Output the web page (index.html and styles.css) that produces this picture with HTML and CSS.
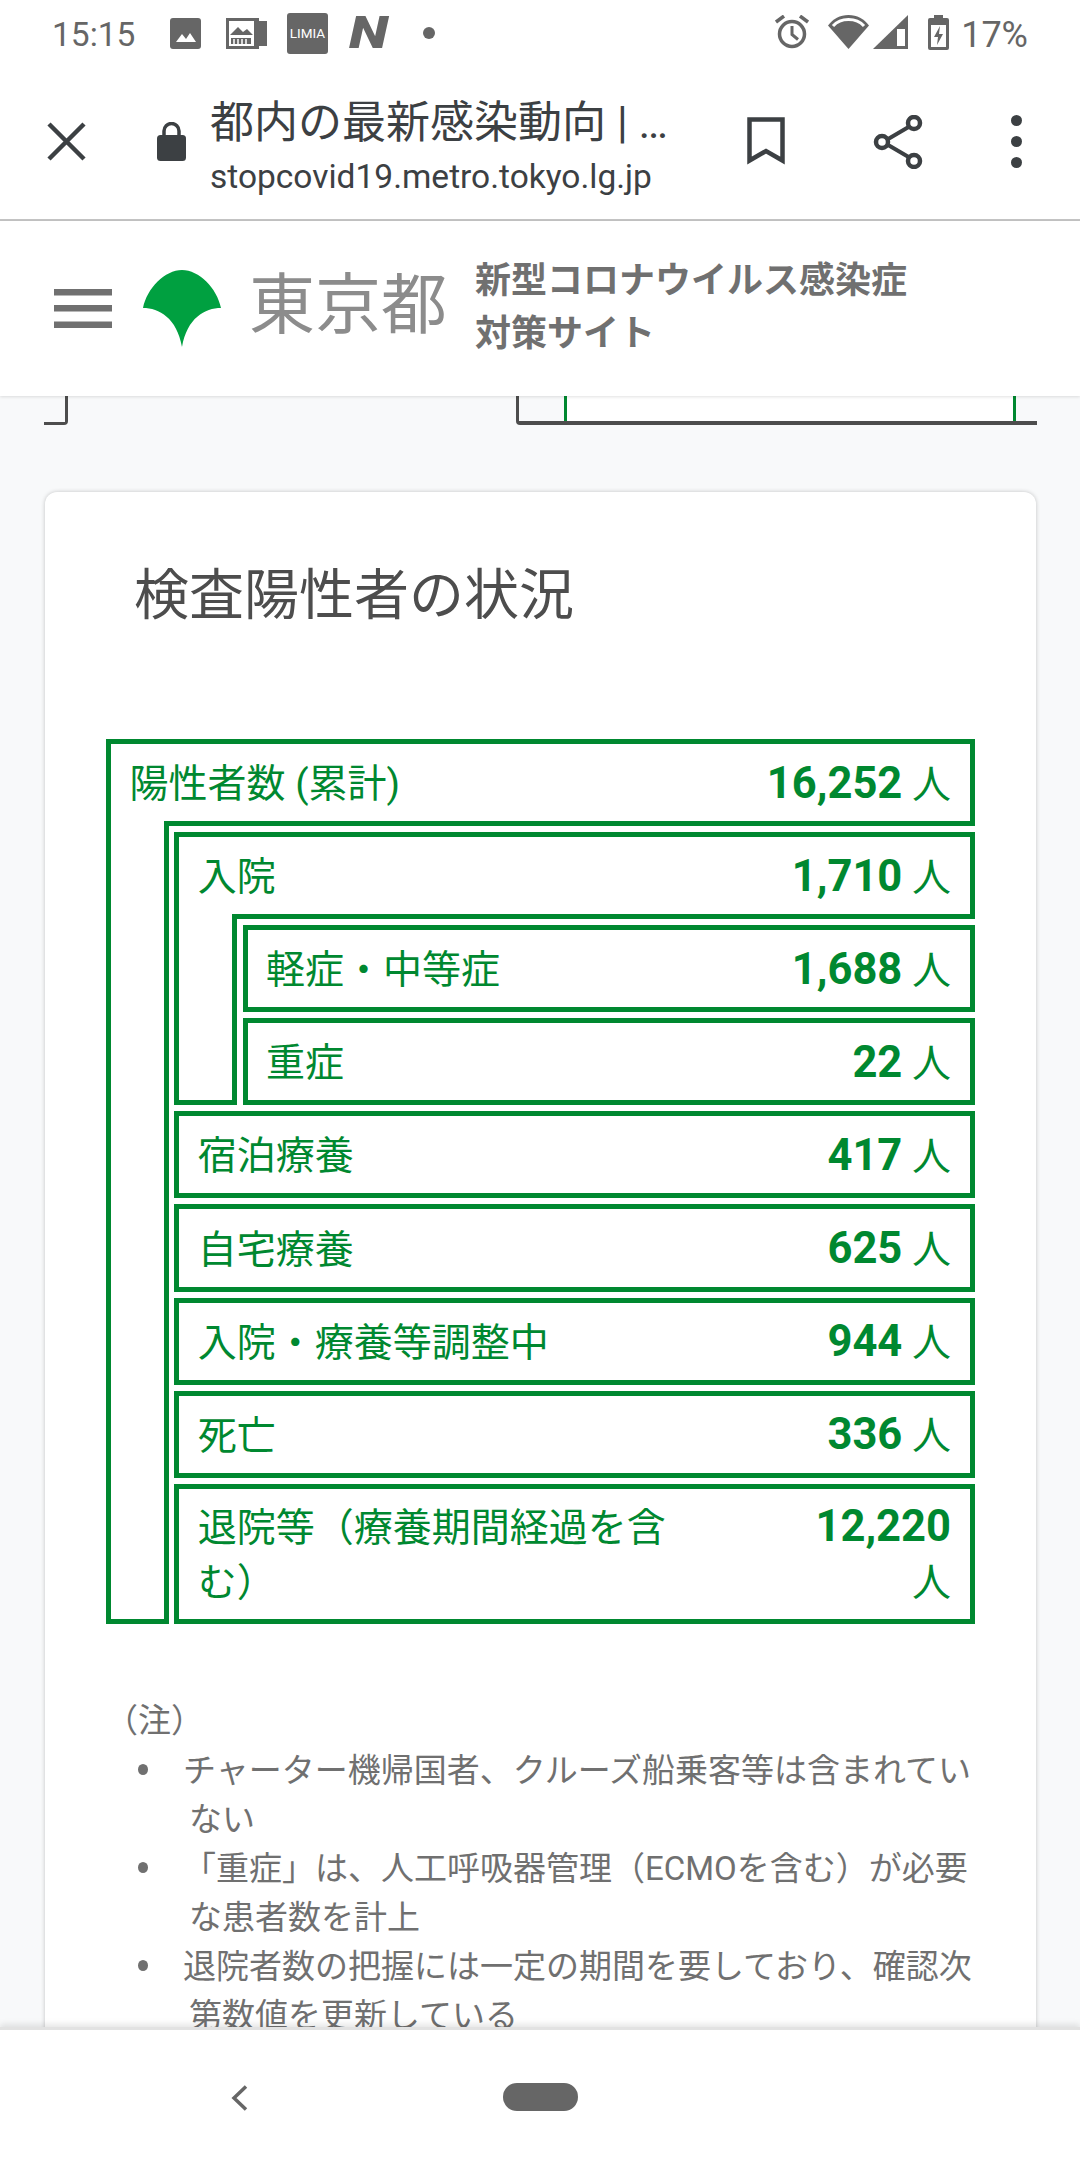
FILE: index.html
```html
<!DOCTYPE html>
<html lang="ja">
<head>
    <meta charset="UTF-8">
    <meta name="viewport" content="width=device-width, initial-scale=1.0">
    <title>都内の最新感染動向</title>
    <link rel="stylesheet" href="styles.css">
</head>
<body>
<div class="screen">

    <div class="statusbar">
        <span class="time">15:15</span>
        <svg class="ic-photo" width="31" height="31" viewBox="0 0 31 31"><rect width="31" height="31" rx="3" fill="#666"/><path d="M6 24l6-8 4 5 4-6 6 9z" fill="#fff"/></svg>
        <svg class="ic-news" width="41" height="31" viewBox="0 0 41 31"><path d="M30 3h11v25H30z" fill="#666"/><rect x="1.5" y="1.5" width="30" height="28" fill="#fff" stroke="#666" stroke-width="3"/><path d="M28 3h3v25h-3z" fill="#666"/><path d="M4 17l8-8 5 5 4-3 6 6z" fill="#666"/><path d="M5 20h20v6H5z" fill="#666"/><path d="M8 21v5M12 21v5M16 21v5M20 21v5" stroke="#fff" stroke-width="1.5"/></svg>
        <span class="limia">LIMIA</span>
        <span class="news-n">N</span>
        <span class="dot"></span>
        <span class="status-right">
            <svg class="ic-alarm" width="34" height="34" viewBox="0 0 34 34"><circle cx="17" cy="19" r="12.5" fill="none" stroke="#666" stroke-width="3.5"/><path d="M17 11v8.5l6 5" fill="none" stroke="#666" stroke-width="3"/><path d="M1 7l8-6M33 7l-8-6" stroke="#666" stroke-width="3.5"/></svg>
            <svg class="ic-wifi" width="41" height="34" viewBox="0 0 41 34"><path d="M0 10.5C5 4 12 0 20.5 0S36 4 41 10.5L20.5 34z" fill="#666"/><path d="M5 11C9 6.5 14 4.500 20.5 4.5S32 6.5 36 11" fill="none" stroke="#fff" stroke-width="3"/></svg>
            <svg class="ic-signal" width="35" height="34" viewBox="0 0 35 34"><path d="M35 0v34H0z" fill="#666"/><path d="M24 14h8v17h-8z" fill="#fff"/></svg>
            <svg class="ic-battery" width="21" height="35" viewBox="0 0 21 35"><path d="M6 0h9v3h4a2 2 0 0 1 2 2v28a2 2 0 0 1-2 2H2a2 2 0 0 1-2-2V5a2 2 0 0 1 2-2h4z" fill="#666"/><path d="M3 6h15v26H3z" fill="#fff"/><path d="M3 6h15v4H3z" fill="#666"/><path d="M12 11l-6 11h4l-1 8 6-11h-4z" fill="#666"/></svg>
            <span class="percent">17%</span>
        </span>
    </div>

    <div class="toolbar">
        <svg class="ic-close" width="39" height="39" viewBox="0 0 39 39"><path d="M2 2l35 35M37 2L2 37" stroke="#3c4043" stroke-width="4.5"/></svg>
        <svg class="ic-lock" width="29" height="39" viewBox="0 0 29 39"><path d="M7 15V9a7.5 7.5 0 0 1 15 0v6" fill="none" stroke="#3c4043" stroke-width="3.5"/><rect y="13" width="29" height="26" rx="3.5" fill="#3c4043"/></svg>
        <div class="page-info">
            <div class="page-title">都内の最新感染動向 | …</div>
            <div class="page-url">stopcovid19.metro.tokyo.lg.jp</div>
        </div>
        <svg class="ic-bookmark" width="38" height="49" viewBox="0 0 38 49"><path d="M2.5 2.5h33v41L19 34 2.5 43.5z" fill="none" stroke="#3c4043" stroke-width="4.5"/></svg>
        <svg class="ic-share" width="50" height="54" viewBox="0 0 50 54"><path d="M39 10L10 27l29 17" fill="none" stroke="#3c4043" stroke-width="4"/><circle cx="41" cy="8" r="6" fill="#fff" stroke="#3c4043" stroke-width="4.5"/><circle cx="9" cy="27" r="6" fill="#fff" stroke="#3c4043" stroke-width="4.5"/><circle cx="41" cy="46" r="6" fill="#fff" stroke="#3c4043" stroke-width="4.5"/></svg>
        <div class="ic-dots"><span></span><span></span><span></span></div>
    </div>

    <header class="site-header">
        <svg class="ic-menu" width="58" height="39" viewBox="0 0 58 39"><path d="M0 0h58v6.5H0zM0 16h58v6.5H0zM0 32.5h58V39H0z" fill="#707070"/></svg>
        <svg class="ic-ginkgo" width="78" height="77" viewBox="0 0 78 77"><path d="M39 0C56 0 74 18 78 38 62 38 44 48 39 77 34 48 16 38 0 38 4 18 22 0 39 0z" fill="#00a040"/></svg>
        <span class="tokyo">東京都</span>
        <h1 class="site-title">新型コロナウイルス感染症<br>対策サイト</h1>
    </header>

    <main class="content">
        <div class="prev-card">
            <div class="prev-left"></div>
            <div class="prev-right"><div class="prev-cell"></div></div>
        </div>

        <section class="card">
            <h2 class="card-title">検査陽性者の状況</h2>

            <div class="tree">
                <div class="row"><span class="label">陽性者数 (累計)</span><span class="value"><b>16,252</b> 人</span></div>
                <div class="rail"></div>
                <div class="branch">
                    <div class="tree">
                        <div class="row"><span class="label">入院</span><span class="value"><b>1,710</b> 人</span></div>
                        <div class="rail"></div>
                        <div class="branch">
                            <div class="row"><span class="label">軽症・中等症</span><span class="value"><b>1,688</b> 人</span></div>
                            <div class="row"><span class="label">重症</span><span class="value"><b>22</b> 人</span></div>
                        </div>
                    </div>
                    <div class="row"><span class="label">宿泊療養</span><span class="value"><b>417</b> 人</span></div>
                    <div class="row"><span class="label">自宅療養</span><span class="value"><b>625</b> 人</span></div>
                    <div class="row"><span class="label">入院・療養等調整中</span><span class="value"><b>944</b> 人</span></div>
                    <div class="row"><span class="label">死亡</span><span class="value"><b>336</b> 人</span></div>
                    <div class="row"><span class="label">退院等（療養期間経過を含<br>む）</span><span class="value"><b>12,220</b><br>人</span></div>
                </div>
            </div>

            <div class="notes">
                <p>（注）</p>
                <ul>
                    <li>チャーター機帰国者、クルーズ船乗客等は含まれていない</li>
                    <li>「重症」は、人工呼吸器管理（ECMOを含む）が必要な患者数を計上</li>
                    <li>退院者数の把握には一定の期間を要しており、確認次第数値を更新している</li>
                </ul>
            </div>
        </section>
    </main>

    <div class="navbar">
        <svg class="ic-back" width="17" height="26" viewBox="0 0 17 26"><path d="M15 1.5L3 13l12 11.5" fill="none" stroke="#666" stroke-width="3.5"/></svg>
        <span class="pill"></span>
    </div>

</div>
</body>
</html>
```

FILE: styles.css
```css
* {
    box-sizing: border-box;
}

html, body {
    margin: 0;
    padding: 0;
}

body {
    font-family: Roboto, "Noto Sans CJK JP", sans-serif;
    background-color: #fff;
}

svg {
    display: block;
    flex-shrink: 0;
}

.screen {
    width: 1080px;
    height: 2160px;
    overflow: hidden;
    display: flex;
    flex-direction: column;
}

/* status bar */
.statusbar {
    height: 64px;
    padding: 0 52px 0 52px;
    display: flex;
    align-items: flex-start;
    color: #666;
    background: #fff;
}

.time, .percent {
    font-size: 33.5px;
    line-height: 70px;
}

.percent {
    margin-left: 12px;
    font-size: 36px;
}

.time {
    width: 82px;
}

.ic-photo {
    margin: 18px 0 0 36px;
}

.ic-news {
    margin: 18px 0 0 25px;
}

.limia {
    width: 41px;
    height: 41px;
    margin: 13px 0 0 20px;
    border-radius: 3px;
    background: #666;
    color: #fff;
    font-size: 13.5px;
    line-height: 41px;
    text-align: center;
}

.news-n {
    width: 37px;
    margin: 0 0 0 22px;
    font-size: 44px;
    font-weight: 900;
    font-style: italic;
    line-height: 67px;
    text-align: center;
    transform: scaleX(1.3);
}

.dot {
    width: 12px;
    height: 12px;
    margin: 27px 0 0 36px;
    border-radius: 50%;
    background: #666;
}

.status-right {
    margin-left: auto;
    display: flex;
    align-items: flex-start;
}

.ic-alarm, .ic-wifi, .ic-battery {
    margin-top: 15px;
}

.ic-signal {
    margin: 15px 0 0 4px;
}

.ic-wifi {
    margin-left: 19px;
}

.ic-battery {
    margin-left: 20px;
}

/* browser toolbar */
.toolbar {
    height: 157px;
    padding-left: 47px;
    display: flex;
    align-items: center;
    background: #fff;
    border-bottom: 2px solid #c4c4c4;
}

.ic-lock {
    margin-left: 71px;
}

.page-info {
    width: 537px;
    margin-left: 24px;
    padding-top: 10px;
    color: #3c4043;
}

.page-title {
    font-size: 44px;
    line-height: 60px;
    white-space: nowrap;
}

.page-url {
    font-size: 33.5px;
    line-height: 47px;
    white-space: nowrap;
}

.ic-share {
    margin-left: 88px;
}

.ic-dots {
    margin-left: 88px;
    display: flex;
    flex-direction: column;
    gap: 10px;
}

.ic-dots span {
    width: 11px;
    height: 11px;
    border-radius: 50%;
    background: #3c4043;
}

/* site header */
.site-header {
    position: relative;
    z-index: 2;
    height: 175px;
    padding-left: 54px;
    display: flex;
    align-items: center;
    background: #fff;
    box-shadow: 0 1px 3px rgba(0, 0, 0, 0.12);
}

.ic-ginkgo {
    margin-left: 31px;
}

.tokyo {
    margin: -6px 0 0 28px;
    font-size: 66px;
    font-weight: 400;
    line-height: 1;
    color: #8c8c8c;
}

.site-title {
    margin: -2px 0 0 28px;
    font-size: 36px;
    font-weight: 700;
    line-height: 53px;
    color: #707070;
}

/* page content */
.content {
    flex: 1;
    min-height: 0;
    overflow: hidden;
    background: #f8f9fa;
}

.prev-card {
    height: 29px;
    padding-left: 44px;
    display: flex;
}

.prev-left {
    width: 24px;
    border-right: 3px solid #4d4d4d;
    border-bottom: 3px solid #4d4d4d;
    border-bottom-right-radius: 4px;
}

.prev-right {
    width: 521px;
    margin-left: 448px;
    padding-left: 45px;
    border-left: 3px solid #4d4d4d;
    border-bottom: 4px solid #4d4d4d;
    border-bottom-left-radius: 4px;
}

.prev-cell {
    width: 452px;
    height: 100%;
    background: #fff;
    border-left: 3px solid #008830;
    border-right: 3px solid #008830;
}

.card {
    width: 991px;
    margin: 67px 0 0 45px;
    padding: 73px 61px 0 61px;
    height: 1600px;
    background: #fff;
    border-radius: 12px;
    box-shadow: 0 0 4px rgba(0, 0, 0, 0.22);
}

.card-title {
    margin: 0 0 114px 28px;
    font-size: 55px;
    font-weight: 400;
    line-height: 60px;
    color: #4d4d4d;
}

/* bordered tree of counts */
.tree {
    display: grid;
    grid-template-columns: 68.25px 1fr;
    color: #008830;
}

.tree > .row {
    grid-column: 1 / 3;
}

/* rail sits over the bottom border of the row above, so the left side stays open */
.rail {
    width: 63px;
    margin-top: -5px;
    background: #fff;
    border: 5px solid #008830;
    border-top: 0;
}

.branch {
    min-width: 0;
    padding-top: 6px;
    display: flex;
    flex-direction: column;
    gap: 6px;
}

.row {
    min-height: 87.1px;
    padding: 9.5px 19px 7.5px 18.5px;
    display: flex;
    align-items: center;
    justify-content: space-between;
    border: 5px solid #008830;
    font-size: 39px;
    line-height: 55px;
    color: #008830;
    background: #fff;
}

.label {
    padding-top: 2px;
}

.value {
    padding-top: 1px;
    text-align: right;
    white-space: nowrap;
}

.value b {
    font-size: 43.5px;
    font-weight: 700;
}

/* notes */
.notes {
    width: 858px;
    margin: 72.5px 0 0 21px;
    font-size: 33px;
    line-height: 49px;
    color: #707070;
}

.notes p {
    margin: 0 0 0.5px -22px;
}

.notes ul {
    margin: 0;
    padding: 0 0 0 62px;
    list-style: none;
}

.notes li {
    position: relative;
    text-indent: -6px;
}

.notes li::before {
    content: "";
    position: absolute;
    left: -51px;
    top: 18px;
    width: 10px;
    height: 11px;
    border-radius: 50%;
    background: #707070;
}

/* bottom nav */
.navbar {
    position: relative;
    height: 133px;
    padding-top: 53px;
    display: flex;
    align-items: flex-start;
    background: #fff;
    border-top: 3px solid #e2e2e2;
    box-shadow: 0 -3px 6px rgba(0, 0, 0, 0.1);
}

.ic-back {
    margin: 2px 0 0 231px;
}

.pill {
    width: 75px;
    height: 28px;
    margin-left: 255px;
    border-radius: 14px;
    background: #666;
}
```
